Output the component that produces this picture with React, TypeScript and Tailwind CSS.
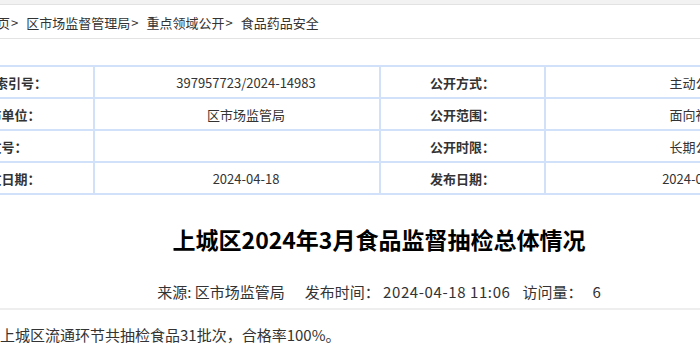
import React from "react";

const font = { fontFamily: '"Noto Sans CJK SC", "Noto Sans", sans-serif' };

const rows: [string, string, string, string][] = [
  ["信息索引号：", "397957723/2024-14983", "公开方式：", "主动公开"],
  ["发布单位：", "区市场监管局", "公开范围：", "面向社会"],
  ["文号：", "", "公开时限：", "长期公开"],
  ["成文日期：", "2024-04-18", "发布日期：", "2024-04-18"],
];

const crumbs = ["首页", "区市场监督管理局", "重点领域公开", "食品药品安全"];

export default function App() {
  return (
    <div className="w-[700px] h-[350px] overflow-hidden bg-white text-[#333]" style={font}>
      <div className="h-[5px] bg-[#f2f2f2] border-b border-[#e2e2e2]" />
      <div className="h-[34px] border-b border-[#e3e3e3] flex items-center pt-[3px]">
        <div className="ml-[-16px] text-[13px] leading-[16px] whitespace-nowrap text-[#333] flex">
          {crumbs.map((c, i) => (
            <span key={i} className="flex">
              <span>{c}</span>
              {i < crumbs.length - 1 && <span className="mr-[8px] ml-[1px]">&gt;</span>}
            </span>
          ))}
        </div>
      </div>
      <div className="w-[916px] ml-[-79px]">
        <div className="mt-[26px]">
          <table className="border-collapse w-[916px] table-fixed">
            <colgroup>
              <col className="w-[172px]" />
              <col className="w-[286px]" />
              <col className="w-[165px]" />
              <col className="w-[293px]" />
            </colgroup>
            <tbody>
              {rows.map((r, i) => (
                <tr key={i} className="h-[32px]">
                  <td className="border-2 border-[#d0e1f9] text-center text-[13px] font-bold leading-[16px] pt-[2px] px-0 pb-0">{r[0]}</td>
                  <td className="border-2 border-[#d0e1f9] text-center text-[13px] leading-[16px] pl-[18px] pr-0 pt-[2px] pb-0">{r[1]}</td>
                  <td className="border-2 border-[#d0e1f9] text-center text-[13px] font-bold leading-[16px] pt-[2px] px-0 pb-0">{r[2]}</td>
                  <td className="border-2 border-[#d0e1f9] text-center text-[13px] leading-[16px] pl-[8px] pr-0 pt-[2px] pb-0">{r[3]}</td>
                </tr>
              ))}
            </tbody>
          </table>
        </div>
        <h1 className="mt-[29px] text-center text-[23px] font-bold leading-[30px] text-black">
          上城区2024年3月食品监督抽检总体情况
        </h1>
        <div className="mt-[28px] text-center text-[15px] leading-[20px] text-[#333] whitespace-nowrap">
          <span>来源: 区市场监管局</span>
          <span className="ml-[20px]">发布时间： <span className="tracking-[0.6px]">2024-04-18 11:06</span></span>
          <span className="ml-[12px]">访问量：<span className="ml-[10px]">6</span></span>
        </div>
        <div className="mt-[6px] h-[2px] bg-[#eeeeee]" />
      </div>
      <div className="mt-[15px] text-[15px] leading-[20px] text-[#333] whitespace-nowrap">
        上城区流通环节共抽检食品31批次，合格率100%。
      </div>
    </div>
  );
}
